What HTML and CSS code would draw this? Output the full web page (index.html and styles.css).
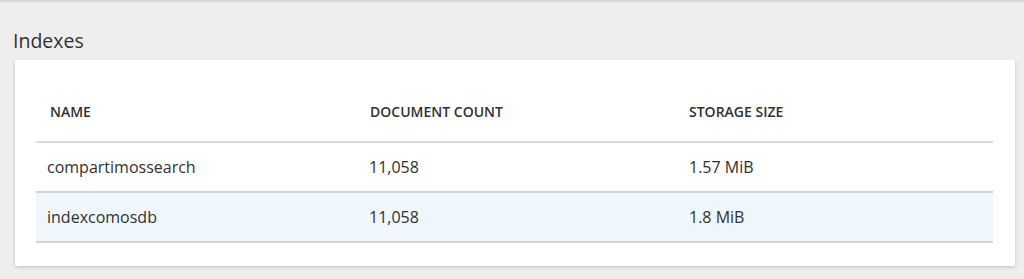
FILE: index.html
```html
<!DOCTYPE html>
<html>
<head>
<meta charset="utf-8">
<link rel="stylesheet" href="styles.css">
</head>
<body>
<div class="page">
  <h2 class="title">Indexes</h2>
  <div class="card">
    <div class="table">
      <div class="row head">
        <div class="cell">NAME</div>
        <div class="cell">DOCUMENT COUNT</div>
        <div class="cell">STORAGE SIZE</div>
      </div>
      <div class="row">
        <div class="cell">compartimossearch</div>
        <div class="cell">11,058</div>
        <div class="cell">1.57 MiB</div>
      </div>
      <div class="row selected">
        <div class="cell">indexcomosdb</div>
        <div class="cell">11,058</div>
        <div class="cell">1.8 MiB</div>
      </div>
    </div>
  </div>
</div>
</body>
</html>
```
FILE: styles.css
```css
html, body {
  margin: 0;
  padding: 0;
  background: #eeeeee;
}
body {
  font-family: "Open Sans", "Noto Sans", sans-serif;
  color: #323130;
}
.page {
  border-top: 2px solid #d8d8d8;
  height: 277px;
  overflow: hidden;
}
.title {
  margin: 0;
  padding: 26px 0 0 13px;
  height: 32px;
  font-size: 19.5px;
  font-weight: 400;
  line-height: 26px;
  color: #323130;
}
.card {
  margin: 0 9px 0 15px;
  background: #ffffff;
  padding: 21px 22px 23px 21px;
  box-shadow: 0 1.6px 3.6px rgba(0,0,0,0.18), 0 0.3px 0.9px rgba(0,0,0,0.12);
}
.row {
  display: grid;
  grid-template-columns: 322px 320px 1fr;
  height: 50px;
  align-items: center;
  border-bottom: 2px solid #d4d4d4;
  box-sizing: border-box;
  font-size: 16px;
}
.row .cell {
  padding-left: 11px;
}
.row.head {
  height: 62px;
  font-size: 14px;
  font-weight: 600;
  border-bottom-color: #dadada;
}
.row.head .cell:nth-child(1) {
  padding-left: 14px;
}
.row.head .cell:nth-child(2) {
  padding-left: 12px;
}
.row.selected {
  background: #eff6fc;
}
```
